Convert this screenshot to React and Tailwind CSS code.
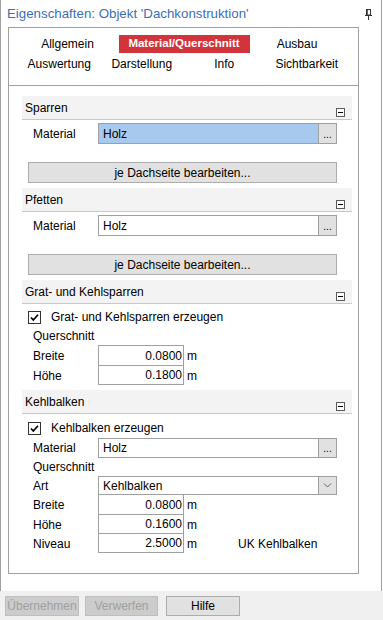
import { Fragment } from 'react';

const font = "font-['Liberation_Sans',Arial,sans-serif]";

function Collapse() {
  return (
    <div className="mb-[2px] mr-[7px] flex h-[9px] w-[9px] items-center justify-center self-end border border-[#5a5a5a] bg-white">
      <div className="h-px w-[5px] bg-black" />
    </div>
  );
}

function SectionHeader({ title }) {
  return (
    <div className="flex h-[24px] justify-between border-b border-[#c8c8c8] bg-[#f3f3f3]">
      <span className="self-center pl-[3px]">{title}</span>
      <Collapse />
    </div>
  );
}

function Check() {
  return (
    <div className="flex h-[13px] w-[13px] items-center justify-center border border-[#333] bg-white">
      <svg width="11" height="11" viewBox="0 0 11 11">
        <path d="M2 5.5 L4.3 8 L9 2.8" fill="none" stroke="#000" strokeWidth="1.7" />
      </svg>
    </div>
  );
}

function PickField({ value, selected, h = 'h-[21px]' }) {
  return (
    <div className={`flex w-[239px] border border-[#a0a0a0] ${h}`}>
      <div className={`flex flex-1 items-center pl-[4px] ${selected ? 'bg-[#a8c9ee]' : 'bg-white'}`}>
        {value}
      </div>
      <div className="flex w-[18px] items-end justify-center border-l border-[#a0a0a0] bg-[#e1e1e1] pb-[3px] text-[10px] leading-none">
        ...
      </div>
    </div>
  );
}

function MaterialBlock({ selected }) {
  return (
    <div className="pb-[5px]">
      <div className="mt-[3px] flex pl-[11px]">
        <span className="flex w-[65px] items-center">Material</span>
        <PickField value="Holz" selected={selected} />
      </div>
      <div className="ml-[6px] mt-[18px] flex h-[21px] w-[309px] items-center justify-center border border-[#adadad] bg-[#e1e1e1]">
        je Dachseite bearbeiten...
      </div>
    </div>
  );
}

function NumRows({ rows, firstTop = true }) {
  return rows.map((r, i) => (
    <div key={r.label} className={`flex pl-[11px] ${i === 0 ? (firstTop ? 'h-[21px]' : 'h-[20px]') : 'h-[19px]'}`}>
      <span className="flex w-[65px] items-center">{r.label}</span>
      <div
        className={`flex w-[86px] items-center justify-end border-x border-b border-[#a0a0a0] pr-[1px] ${
          i === 0 && firstTop ? 'border-t' : ''
        }`}
      >
        {r.value}
      </div>
      <span className="flex w-[54px] items-center pl-[3px]">m</span>
      {r.extra && <span className="flex items-center">{r.extra}</span>}
    </div>
  ));
}

function CheckRow({ label, mt }) {
  return (
    <div className={`flex h-[20px] items-center pl-[6px] ${mt}`}>
      <Check />
      <span className="ml-[10px]">{label}</span>
    </div>
  );
}

function Pin() {
  return (
    <svg width="8" height="11" viewBox="0 0 8 11" className="mt-[1px]">
      <rect x="1.5" y="0.5" width="4" height="5.5" fill="none" stroke="#333" />
      <line x1="2" y1="0.5" x2="2" y2="6" stroke="#333" strokeWidth="1.5" />
      <line x1="0" y1="6.5" x2="7" y2="6.5" stroke="#333" />
      <line x1="3.5" y1="7" x2="3.5" y2="11" stroke="#333" />
    </svg>
  );
}

const row2 = ['Auswertung', 'Darstellung', 'Info', 'Sichtbarkeit'];

export default function App() {
  return (
    <div className={`flex h-[620px] w-[383px] flex-col bg-white text-[12px] leading-none text-black ${font}`}>
      <div className="flex w-[382px] flex-1 flex-col border-x border-[#a0a0a0]">
        <div className="flex h-[27px] items-center justify-between pl-[6px] pr-[8px]">
          <span className="text-[13.3px] text-[#3a6fb7]">Eigenschaften: Objekt 'Dachkonstruktion'</span>
          <Pin />
        </div>

        <div className="ml-[7px] flex h-[547px] w-[351px] flex-col border border-[#a0a0a0]">
          <div className="h-[58px] border-b border-[#a0a0a0] pt-[7px]">
            <div className="flex h-[18px]">
              <div className="flex w-[117px] items-center justify-center">Allgemein</div>
              <div className="flex w-[116px] items-center justify-center">
                <div className="flex h-[18px] w-[131px] shrink-0 items-center justify-center bg-[#d1343b] text-[11.5px] font-bold text-white">
                  Material/Querschnitt
                </div>
              </div>
              <div className="flex w-[110px] items-center justify-center">Ausbau</div>
            </div>
            <div className="ml-[9px] mt-[2px] grid h-[18px] w-[330px] grid-cols-4">
              {row2.map((t) => (
                <div key={t} className="flex items-center justify-center">
                  {t}
                </div>
              ))}
            </div>
          </div>

          <div className="pl-[13px] pr-[6px] pt-[10px]">
            <SectionHeader title="Sparren" />
            <MaterialBlock selected />

            <SectionHeader title="Pfetten" />
            <MaterialBlock />

            <SectionHeader title="Grat- und Kehlsparren" />
            <div className="pb-[5px]">
              <CheckRow label="Grat- und Kehlsparren erzeugen" mt="mt-[3px]" />
              <div className="flex h-[18px] items-center pl-[11px]">Querschnitt</div>
              <NumRows
                rows={[
                  { label: 'Breite', value: '0.0800' },
                  { label: 'Höhe', value: '0.1800' },
                ]}
              />
            </div>

            <SectionHeader title="Kehlbalken" />
            <div>
              <CheckRow label="Kehlbalken erzeugen" mt="mt-[4px]" />
              <div className="flex pl-[11px]">
                <span className="flex w-[65px] items-center">Material</span>
                <PickField value="Holz" h="h-[20px]" />
              </div>
              <div className="flex h-[18px] items-center pl-[11px]">Querschnitt</div>
              <div className="flex h-[19px] pl-[11px]">
                <span className="flex w-[65px] items-center">Art</span>
                <div className="flex w-[239px] border border-[#a0a0a0]">
                  <div className="flex flex-1 items-center pl-[4px]">Kehlbalken</div>
                  <div className="flex w-[18px] items-center justify-center border-l border-[#a0a0a0] bg-[#e1e1e1]">
                    <svg width="9" height="5" viewBox="0 0 9 5">
                      <path d="M1 0.5 L4.5 4 L8 0.5" fill="none" stroke="#606060" />
                    </svg>
                  </div>
                </div>
              </div>
              <NumRows
                firstTop={false}
                rows={[
                  { label: 'Breite', value: '0.0800' },
                  { label: 'Höhe', value: '0.1600' },
                  { label: 'Niveau', value: '2.5000', extra: 'UK Kehlbalken' },
                ]}
              />
            </div>
          </div>
        </div>
      </div>

      <div className="flex h-[29px] items-start bg-[#f0f0f0] pl-[5px] pt-[5px]">
        <div className="flex h-[20px] w-[74px] items-center justify-center border border-[#bfbfbf] bg-[#cccccc] text-[#a0a0a0]">
          Übernehmen
        </div>
        <div className="ml-[6px] flex h-[20px] w-[73px] items-center justify-center border border-[#bfbfbf] bg-[#cccccc] text-[#a0a0a0]">
          Verwerfen
        </div>
        <div className="ml-[8px] flex h-[20px] w-[74px] items-center justify-center border border-[#adadad] bg-[#e1e1e1]">
          Hilfe
        </div>
      </div>
    </div>
  );
}
